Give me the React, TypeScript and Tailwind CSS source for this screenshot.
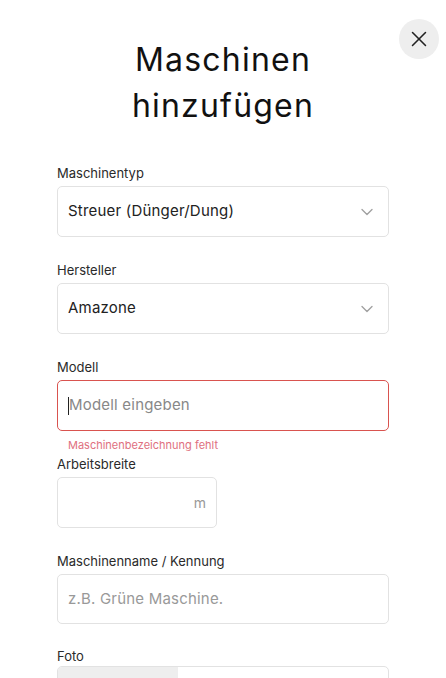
import React from 'react';
import { X, ChevronDown } from 'lucide-react';

const font = { fontFamily: 'Inter, "Noto Sans", sans-serif' };

function Label({ children }: { children: React.ReactNode }) {
  return <div className="text-[13px] leading-4 text-[#2a2a2a] mb-[5px]">{children}</div>;
}

function SelectBox({ value }: { value: string }) {
  return (
    <div className="h-[51px] w-full rounded-[5px] border border-[#e2e2e2] flex items-center justify-between pl-[10px] pr-[11px]">
      <span className="text-[15px] text-[#222] tracking-[0.2px]">{value}</span>
      <ChevronDown className="w-5 h-5 text-[#a0a0a0]" strokeWidth={1.6} />
    </div>
  );
}

export default function App() {
  return (
    <div className="min-h-screen bg-white relative" style={font}>
      <button className="absolute right-[7px] top-[19px] w-10 h-10 rounded-full bg-[#eeeeee] flex items-center justify-center text-[#222]">
        <X className="w-[26px] h-[26px]" strokeWidth={1.4} />
      </button>

      <div className="pt-[37px] px-[57px]">
        <h1 className="text-center text-[32px] leading-[46px] font-normal text-[#111] tracking-[1.2px]">
          Maschinen
          <br />
          hinzufügen
        </h1>

        <div className="mt-[36px]">
          <Label>Maschinentyp</Label>
          <SelectBox value="Streuer (Dünger/Dung)" />
        </div>

        <div className="mt-[25px]">
          <Label>Hersteller</Label>
          <SelectBox value="Amazone" />
        </div>

        <div className="mt-[25px]">
          <Label>Modell</Label>
          <div className="h-[51px] w-full rounded-[5px] border border-[#d9534f] flex items-center pl-[10px]">
            <span className="w-px h-[18px] bg-[#222]" />
            <span className="text-[15px] text-[#888] tracking-[0.2px]">Modell eingeben</span>
          </div>
          <div className="pl-[11px] mt-[7px] text-[11px] leading-[14px] text-[#e07080]">Maschinenbezeichnung fehlt</div>
        </div>

        <div className="mt-[4px]">
          <Label>Arbeitsbreite</Label>
          <div className="h-[51px] w-[160px] rounded-[5px] border border-[#e2e2e2] flex items-center justify-end pr-[10px]">
            <span className="text-[14px] text-[#999]">m</span>
          </div>
        </div>

        <div className="mt-[25px]">
          <Label>Maschinenname / Kennung</Label>
          <div className="h-[50px] w-full rounded-[5px] border border-[#e2e2e2] flex items-center pl-[10px]">
            <span className="text-[15px] text-[#999] tracking-[0.2px]">z.B. Grüne Maschine.</span>
          </div>
        </div>

        <div className="mt-[24px]">
          <div className="text-[13px] leading-4 text-[#2a2a2a] mb-[2px]">Foto</div>
          <div className="h-[51px] w-full rounded-[5px] border border-[#e2e2e2] flex overflow-hidden">
            <div className="w-[120px] bg-[#eeeeee]" />
          </div>
        </div>
      </div>
    </div>
  );
}
